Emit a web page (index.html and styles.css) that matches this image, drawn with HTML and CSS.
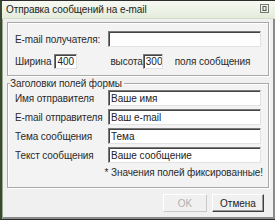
FILE: index.html
```html
<!DOCTYPE html>
<html lang="ru">
<head>
  <meta charset="UTF-8" />
  <title>Отправка сообщений на e-mail</title>
  <link rel="stylesheet" href="styles.css">
</head>
<body>
  <div class="window">
    <div class="titlebar">
      <span class="title">Отправка сообщений на e-mail</span>
      <span class="close">
        <svg width="9" height="9" viewBox="0 0 9 9">
          <rect x="0.5" y="0.5" width="8" height="8" fill="none" stroke="#777"/>
          <rect x="3" y="2.5" width="3" height="4" fill="none" stroke="#555"/>
        </svg>
      </span>
    </div>

    <div class="content">
      <div class="group top-group">
        <div class="row">
          <span class="lbl wide">E-mail получателя:</span>
          <input class="field long" type="text" value="">
        </div>
        <div class="row size-row">
          <span class="lbl">Ширина</span>
          <input class="field tiny w400" type="text" value="400">
          <span class="lbl hgt">высота</span>
          <input class="field tiny" type="text" value="300">
          <span class="lbl hint">поля сообщения</span>
        </div>
      </div>

      <fieldset class="group headers">
        <legend>Заголовки полей формы</legend>
        <div class="row">
          <span class="lbl wide">Имя отправителя</span>
          <input class="field long" type="text" value="Ваше имя">
        </div>
        <div class="row">
          <span class="lbl wide">E-mail отправителя</span>
          <input class="field long" type="text" value="Ваш e-mail">
        </div>
        <div class="row">
          <span class="lbl wide">Тема сообщения</span>
          <input class="field long" type="text" value="Тема">
        </div>
        <div class="row">
          <span class="lbl wide">Текст сообщения</span>
          <input class="field long" type="text" value="Ваше сообщение">
        </div>
        <div class="note">* Значения полей фиксированные!</div>
      </fieldset>

      <div class="buttons">
        <button class="btn" disabled>OK</button>
        <button class="btn">Отмена</button>
      </div>
    </div>
  </div>
</body>
</html>
```

FILE: styles.css
```css
body {
  margin: 0;
  background: #fff;
  font-family: 'Liberation Sans', Arial, sans-serif;
  font-size: 10px;
  letter-spacing: -0.1px;
  color: #2a2a2a;
}
.window {
  width: 273px;
  height: 218px;
  border: 1px solid #2c2c2c;
  border-left: 2px solid #3a4a30;
  box-sizing: content-box;
  background: #f0f0f0;
  box-shadow: inset 1px 0 0 #9aa890, inset -2px -2px 0 #8a8a8a;
}
.titlebar {
  height: 17px;
  display: flex;
  align-items: center;
  justify-content: space-between;
  padding: 0 4px 0 4px;
  background: linear-gradient(#f6f9f2, #e5ecdc);
  border-bottom: 1px solid #d4dccb;
}
.title {
  color: #222;
}
.close {
  display: flex;
  margin-right: 2px;
  margin-top: -2px;
}
.content {
  padding: 3px 6px 0 5px;
}
.group {
  border: 1px solid #a9a9a9;
  box-shadow: 1px 1px 0 #fff, inset 1px 1px 0 #fff;
  margin: 0;
  background: #f3f3f3;
}
.top-group {
  padding: 8px 4px 6px 7px;
  display: flex;
  flex-direction: column;
  gap: 7px;
}
.headers {
  margin-top: 2px;
  padding: 1px 4px 0 7px;
  display: flex;
  flex-direction: column;
  gap: 3px;
  height: 110px;
  box-sizing: border-box;
}
.headers legend {
  padding: 0 2px 0 0;
  margin-left: -5px;
  color: #2a2a2a;
}
.row {
  display: flex;
  align-items: center;
}
.lbl {
  white-space: nowrap;
}
.wide {
  width: 93px;
  flex: none;
}
.field {
  font: inherit;
  color: #222;
  box-sizing: border-box;
  height: 16px;
  padding: 0 2px;
  border: 1px solid;
  border-color: #7a7a7a #e2e2e2 #e2e2e2 #7a7a7a;
  box-shadow: inset 1px 1px 0 #444;
  background: #fff;
  outline: none;
}
.long {
  width: 153px;
}
.tiny {
  width: 20px;
  height: 15px;
  padding: 0 0 0 2px;
}
.w400 {
  width: 23px;
  margin-left: 3px;
}
.hgt {
  margin-left: 33px;
}
.hint {
  margin-left: 12px;
}
.note {
  text-align: right;
  margin-top: 1px;
  padding-right: 1px;
}
.buttons {
  display: flex;
  justify-content: flex-end;
  gap: 5px;
  margin-top: 6px;
  padding-right: 5px;
}
.btn {
  font: inherit;
  color: #222;
  width: 52px;
  height: 18px;
  padding: 0;
  background: #f0f0f0;
  border: 1px solid;
  border-color: #fff #404040 #404040 #fff;
  box-shadow: inset -1px -1px 0 #9a9a9a;
}
.btn:disabled {
  color: #b0b0b0;
  border-color: #fff #c8c8c8 #c8c8c8 #fff;
  box-shadow: none;
  width: 44px;
}
```
